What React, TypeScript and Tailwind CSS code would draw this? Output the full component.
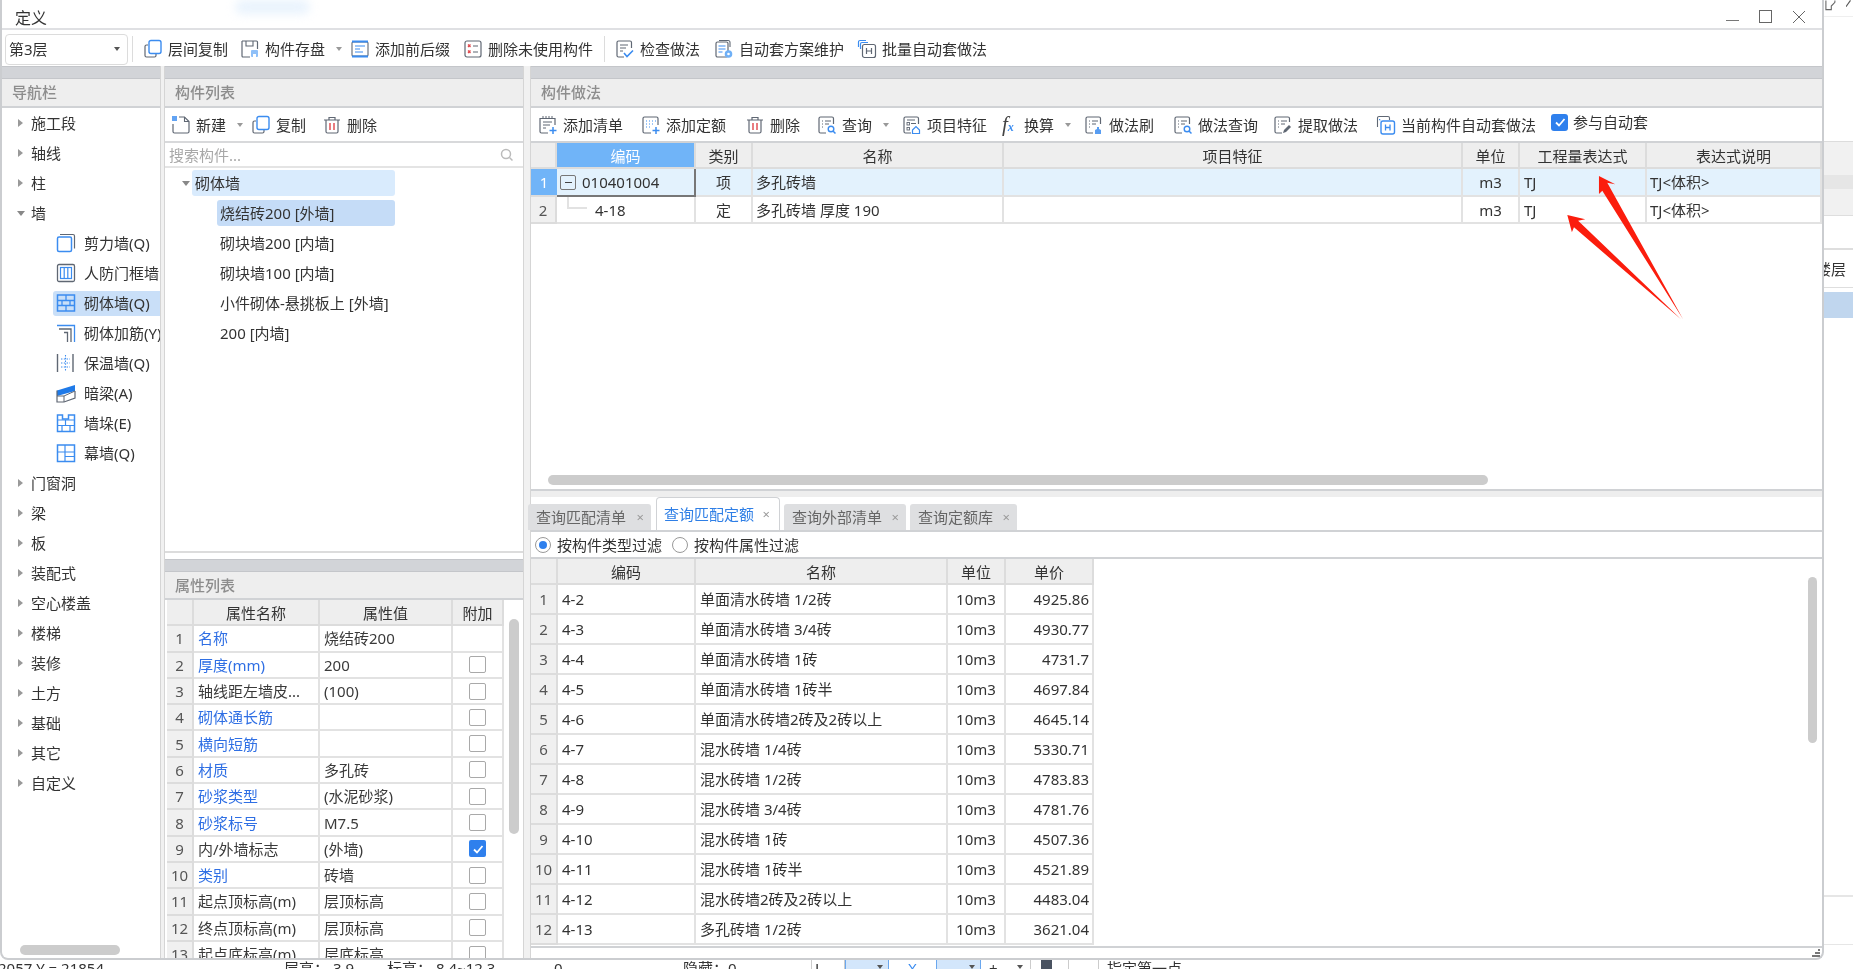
import type { ReactNode } from 'react';
import { clsx } from 'clsx';

const GRAY = '#5f6773';
const BLUE = '#3b8cf0';

function Svg({ children, className }: { children: ReactNode; className?: string }) {
  return (
    <svg viewBox="0 0 20 20" fill="none" className={clsx('h-[20px] w-[20px] shrink-0', className)}>
      {children}
    </svg>
  );
}

const icons: Record<string, ReactNode> = {
  copy: (
    <Svg>
      <path d="M5 6H3.5A1.5 1.5 0 0 0 2 7.500V16.500A1.500 1.500 0 0 0 3.500 18H11.500A1.500 1.500 0 0 0 13 16.500V15" stroke={GRAY} strokeWidth="1.2" />
      <rect x="6" y="1.500" width="12" height="13" rx="2" fill="#fff" stroke={BLUE} strokeWidth="1.4" />
    </Svg>
  ),
  save: (
    <Svg>
      <path d="M2 2h14.500A1 1 0 0 1 17.500 3V10M10 18H3A1 1 0 0 1 2 17V2" stroke={GRAY} strokeWidth="1.2" />
      <path d="M6 2v5h7V2" stroke={GRAY} strokeWidth="1.1" />
      <rect x="11" y="11" width="7" height="7" rx="1" fill="#8fc0f8" />
      <rect x="13" y="15" width="3" height="3" fill="#fff" />
    </Svg>
  ),
  prefix: (
    <Svg>
      <rect x="2" y="3" width="16" height="14" rx="1" stroke={GRAY} strokeWidth="1.1" />
      <path d="M2 2.500h16M2 17.500h16" stroke={BLUE} strokeWidth="1.8" />
      <path d="M5 7h10M5 10h5M5 13h8" stroke={BLUE} strokeWidth="1.1" />
    </Svg>
  ),
  unused: (
    <Svg>
      <rect x="2" y="2" width="16" height="16" rx="2" stroke={GRAY} strokeWidth="1.2" />
      <path d="M5 5.500l2.500 2.500M7.500 5.500L5 8M5 11.500l2.500 2.500M7.500 11.500L5 14" stroke="#e0454a" strokeWidth="1.3" />
      <path d="M10 7h5M10 13h5" stroke={GRAY} strokeWidth="1.1" />
    </Svg>
  ),
  check: (
    <Svg>
      <path d="M9 18H3.500A1.500 1.500 0 0 1 2 16.500V3.500A1.500 1.500 0 0 1 3.500 2H15A1.500 1.500 0 0 1 16.500 3.500V9" stroke={GRAY} strokeWidth="1.2" />
      <path d="M5 6h8M5 9h6M5 12h3" stroke={GRAY} strokeWidth="1" />
      <path d="M9 14l3 3.500 6-6" stroke={BLUE} strokeWidth="1.6" />
    </Svg>
  ),
  plan: (
    <Svg>
      <rect x="2" y="3" width="12" height="15" rx="1.500" stroke={GRAY} strokeWidth="1.2" />
      <path d="M5 1.500h9A2 2 0 0 1 16 3.500V8" stroke={GRAY} strokeWidth="1.1" />
      <path d="M4.500 7h7M4.500 10h7M4.500 13h4" stroke={BLUE} strokeWidth="1.2" />
      <circle cx="14.500" cy="15" r="3.800" fill="#6fb0f7" />
      <circle cx="14.500" cy="15" r="1.300" fill="#fff" />
    </Svg>
  ),
  batch: (
    <Svg>
      <path d="M1.500 8V3A1.500 1.500 0 0 1 3 1.500H9M3.500 10V5A1.500 1.500 0 0 1 5 3.500H11" stroke={BLUE} strokeWidth="1.2" />
      <rect x="5.500" y="5.500" width="13" height="13" rx="2" fill="#fff" stroke={GRAY} strokeWidth="1.2" />
      <path d="M9.500 9v6M14.500 9v6M9.500 12h5" stroke={GRAY} strokeWidth="1.2" />
    </Svg>
  ),
  fresh: (
    <Svg>
      <path d="M8 2h5.500L18 6.500V16.500A1.500 1.500 0 0 1 16.500 18H3.500A1.500 1.500 0 0 1 2 16.500V9" stroke={GRAY} strokeWidth="1.2" />
      <path d="M13.500 2V6.500H18" stroke={GRAY} strokeWidth="1.1" />
      <rect x="1" y="1" width="5" height="5" fill={BLUE} opacity="0.8" />
    </Svg>
  ),
  trash: (
    <Svg>
      <path d="M2 5h16M7 5V2.500h6V5" stroke={GRAY} strokeWidth="1.2" />
      <path d="M4 5v11.500A1.500 1.500 0 0 0 5.500 18h9a1.500 1.500 0 0 0 1.500-1.500V5" stroke={GRAY} strokeWidth="1.2" />
      <path d="M8 8v7M12 8v7" stroke="#e0454a" strokeWidth="1.4" />
    </Svg>
  ),
  addList: (
    <Svg>
      <path d="M10 18H3.500A1.500 1.500 0 0 1 2 16.500V3.500H17V10" stroke={GRAY} strokeWidth="1.2" />
      <path d="M5 1v3M8 1v3M11 1v3M14 1v3M5 7h9M5 10h7M5 13h3" stroke={GRAY} strokeWidth="1" />
      <path d="M15 12v7M11.500 15.500h7" stroke={BLUE} strokeWidth="1.500" />
    </Svg>
  ),
  addQuota: (
    <Svg>
      <path d="M10 18H3.500A1.500 1.500 0 0 1 2 16.500V3.500A1.500 1.500 0 0 1 3.500 2H15.500A1.500 1.500 0 0 1 17 3.500V10" stroke={GRAY} strokeWidth="1.2" />
      <path d="M5 6h1M8 6h1M11 6h1M14 6h1M5 9h1M8 9h1M11 9h1M5 12h1M8 12h1" stroke={BLUE} strokeWidth="1.2" />
      <path d="M15 12v7M11.500 15.500h7" stroke={BLUE} strokeWidth="1.500" />
    </Svg>
  ),
  query: (
    <Svg>
      <path d="M9 18H3.500A1.500 1.500 0 0 1 2 16.500V3.500A1.500 1.500 0 0 1 3.500 2H15A1.500 1.500 0 0 1 16.500 3.500V9" stroke={GRAY} strokeWidth="1.2" />
      <path d="M5 6h1M8 6h6M5 9h1M8 9h4M5 12h1" stroke={GRAY} strokeWidth="1" />
      <circle cx="14" cy="14" r="2.800" stroke={BLUE} strokeWidth="1.400" />
      <path d="M16 16l2.500 2.500" stroke={BLUE} strokeWidth="1.500" />
    </Svg>
  ),
  feature: (
    <Svg>
      <path d="M9 18H3.500A1.500 1.500 0 0 1 2 16.500V3.500A1.500 1.500 0 0 1 3.500 2H15A1.500 1.500 0 0 1 16.500 3.500V9" stroke={GRAY} strokeWidth="1.2" />
      <path d="M5 5h8M9 8.500h5" stroke={GRAY} strokeWidth="1" />
      <rect x="5" y="7.500" width="2.500" height="2.500" stroke={GRAY} strokeWidth="0.9" />
      <rect x="5" y="12.500" width="2.500" height="2.500" stroke={GRAY} strokeWidth="0.9" />
      <path d="M10.500 15l3.500-3.500 3.500 3.500v3.500h-7z" stroke={BLUE} strokeWidth="1.200" />
    </Svg>
  ),
  brush: (
    <Svg>
      <path d="M9 18H3.500A1.500 1.500 0 0 1 2 16.500V3.500A1.500 1.500 0 0 1 3.500 2H15A1.500 1.500 0 0 1 16.500 3.500V9" stroke={GRAY} strokeWidth="1.2" />
      <path d="M5 6h1M8 6h6M5 9h1M8 9h4M5 12h1" stroke={GRAY} strokeWidth="1" />
      <path d="M11 19v-4l2-1v-2h2v2l2 1v4z" fill={BLUE} opacity="0.85" />
    </Svg>
  ),
  extract: (
    <Svg>
      <path d="M9 18H3.500A1.500 1.500 0 0 1 2 16.500V3.500A1.500 1.500 0 0 1 3.500 2H15A1.500 1.500 0 0 1 16.500 3.500V7" stroke={GRAY} strokeWidth="1.2" />
      <path d="M5 6h1M8 6h6M5 9h1M8 9h4M5 12h1" stroke={GRAY} strokeWidth="1" />
      <path d="M10 18l1-3 5-5 2 2-5 5z" fill={GRAY} />
    </Svg>
  ),
  autoH: (
    <Svg>
      <path d="M1.500 12V3A1.500 1.500 0 0 1 3 1.500H12A1.500 1.500 0 0 1 13.500 3V5" stroke={GRAY} strokeWidth="1.1" />
      <path d="M3.500 4v1h1" stroke={BLUE} strokeWidth="1" />
      <rect x="5" y="6" width="13.500" height="13" rx="2" fill="#fff" stroke={BLUE} strokeWidth="1.400" />
      <path d="M9.500 9.500v6M14 9.500v6M9.500 12.500H14" stroke={BLUE} strokeWidth="1.300" />
    </Svg>
  ),
  shear: (
    <Svg>
      <rect x="1.500" y="4" width="14" height="14.500" rx="1.500" stroke={BLUE} strokeWidth="1.500" />
      <path d="M4 1.500H17A1.500 1.500 0 0 1 18.500 3V15.500" stroke={GRAY} strokeWidth="1.200" />
    </Svg>
  ),
  frame: (
    <Svg>
      <rect x="1.500" y="1.500" width="17" height="17" rx="1.500" stroke={GRAY} strokeWidth="1.300" />
      <rect x="4.500" y="4.500" width="11" height="11" stroke={BLUE} strokeWidth="1.200" />
      <path d="M8.200 4.500v11M11.800 4.500v11" stroke={BLUE} strokeWidth="1.200" />
    </Svg>
  ),
  brick: (
    <Svg>
      <rect x="1.500" y="2" width="17" height="16" stroke={BLUE} strokeWidth="1.500" />
      <path d="M1.500 7.500h17M1.500 12.500h17M10 2v5.500M6 7.500v5M14 7.500v5M10 12.500V18" stroke={BLUE} strokeWidth="1.300" />
    </Svg>
  ),
  rebar: (
    <Svg>
      <path d="M1 2.500H18.500V19" stroke={BLUE} strokeWidth="1.300" />
      <path d="M3 6H15V19" stroke={GRAY} strokeWidth="1.300" />
      <path d="M8 9.500H11.500V19" stroke={GRAY} strokeWidth="1.300" />
    </Svg>
  ),
  insulate: (
    <Svg>
      <path d="M1.500 1v18M17 1v18" stroke={GRAY} strokeWidth="1.400" />
      <path d="M5 6h9M5 10h9M5 14h9M9.500 2v16" stroke={BLUE} strokeWidth="1.100" strokeDasharray="1.400 1.400" />
    </Svg>
  ),
  beam: (
    <Svg>
      <path d="M1 7.500L19 2V8L1 13z" fill="#1f7ae8" />
      <path d="M1 7.500V19H8L19 15V8" stroke={GRAY} strokeWidth="1.200" />
      <path d="M1 13H8V19M8 13L19 8" stroke={GRAY} strokeWidth="1" />
    </Svg>
  ),
  pier: (
    <Svg>
      <path d="M1.500 18.500V2h5v4h6V2h6v16.500z" stroke={BLUE} strokeWidth="1.500" />
      <path d="M1.500 7h17M1.500 12.500h17M9.500 7v5.500M6 12.500v6M14 12.500v6" stroke={BLUE} strokeWidth="1.200" />
    </Svg>
  ),
  curtain: (
    <Svg>
      <rect x="1.500" y="2" width="17" height="16.500" stroke={BLUE} strokeWidth="1.500" />
      <path d="M1.500 9h17M9 2v16.500M9 13.500h9.500" stroke={BLUE} strokeWidth="1.200" />
    </Svg>
  ),
};

function Caret({ className }: { className?: string }) {
  return <span className={clsx('h-0 w-0 border-x-[3px] border-t-[4px] border-x-transparent', className ?? 'border-t-[#999]')} />;
}

function Tool({ icon, label, width, caret }: { icon: ReactNode; label: string; width: string; caret?: boolean }) {
  return (
    <div className={clsx('flex shrink-0 items-center gap-[5px]', width)}>
      {icon}
      <span className="whitespace-nowrap">{label}</span>
      {caret ? <Caret className="ml-[6px] border-t-[#999]" /> : null}
    </div>
  );
}

function PanelHead({ title, low }: { title: string; low?: boolean }) {
  return (
    <>
      <div className="h-[13px] shrink-0 border-y border-[#c4c6ca] bg-[#d2d4d8]" />
      <div className={clsx('flex shrink-0 items-center border-b-2 border-[#d0d2d5] bg-[#eeeeee] pl-[10px] font-medium text-[#8d8d8d]', low ? 'h-[28px]' : 'h-[29px] pb-[2px]')}>
        {title}
      </div>
    </>
  );
}

const navItems: { label: string; icon?: keyof typeof icons; open?: boolean; active?: boolean }[] = [
  { label: '施工段' },
  { label: '轴线' },
  { label: '柱' },
  { label: '墙', open: true },
  { label: '剪力墙(Q)', icon: 'shear' },
  { label: '人防门框墙', icon: 'frame' },
  { label: '砌体墙(Q)', icon: 'brick', active: true },
  { label: '砌体加筋(Y)', icon: 'rebar' },
  { label: '保温墙(Q)', icon: 'insulate' },
  { label: '暗梁(A)', icon: 'beam' },
  { label: '墙垛(E)', icon: 'pier' },
  { label: '幕墙(Q)', icon: 'curtain' },
  { label: '门窗洞' },
  { label: '梁' },
  { label: '板' },
  { label: '装配式' },
  { label: '空心楼盖' },
  { label: '楼梯' },
  { label: '装修' },
  { label: '土方' },
  { label: '基础' },
  { label: '其它' },
  { label: '自定义' },
];

function NavPanel() {
  return (
    <div className="relative flex w-[158px] shrink-0 flex-col overflow-hidden">
      <PanelHead title="导航栏" />
      <div>
        {navItems.map((item) =>
          item.icon ? (
            <div key={item.label} className="flex h-[30px] items-center pl-[51px]">
              <div className={clsx('flex h-[25px] flex-1 items-center gap-[8px] whitespace-nowrap rounded-l-[3px] pl-[3px]', item.active && 'bg-[#c9dff8]')}>
                {icons[item.icon]}
                <span>{item.label}</span>
              </div>
            </div>
          ) : (
            <div key={item.label} className="flex h-[30px] items-center pl-[15px]">
              <span className="flex w-[14px] justify-start">
                {item.open ? (
                  <span className="h-0 w-0 border-x-[4px] border-t-[5px] border-x-transparent border-t-[#888]" />
                ) : (
                  <span className="ml-[1px] h-0 w-0 border-y-[4px] border-l-[5px] border-y-transparent border-l-[#999]" />
                )}
              </span>
              <span>{item.label}</span>
            </div>
          ),
        )}
      </div>
      <div className="absolute bottom-[3px] left-[18px] h-[10px] w-[100px] rounded-full bg-[#cccccc]" />
    </div>
  );
}

const treeChildren = ['砌块墙200 [内墙]', '砌块墙100 [内墙]', '小件砌体-悬挑板上 [外墙]', '200 [内墙]'];

const attrs: { name: string; value: string; link: boolean; checked?: boolean; noBox?: boolean }[] = [
  { name: '名称', value: '烧结砖200', link: true, noBox: true },
  { name: '厚度(mm)', value: '200', link: true },
  { name: '轴线距左墙皮...', value: '(100)', link: false },
  { name: '砌体通长筋', value: '', link: true },
  { name: '横向短筋', value: '', link: true },
  { name: '材质', value: '多孔砖', link: true },
  { name: '砂浆类型', value: '(水泥砂浆)', link: true },
  { name: '砂浆标号', value: 'M7.5', link: true },
  { name: '内/外墙标志', value: '(外墙)', link: false, checked: true },
  { name: '类别', value: '砖墙', link: true },
  { name: '起点顶标高(m)', value: '层顶标高', link: false },
  { name: '终点顶标高(m)', value: '层顶标高', link: false },
  { name: '起点底标高(m)', value: '层底标高', link: false },
];

function Head({ children, active }: { children?: ReactNode; active?: boolean }) {
  return (
    <div className={clsx('flex items-center justify-center whitespace-nowrap border-r-2 border-b-2 border-[#dcdcdc] pt-[2px]', active ? 'bg-[#70b4f8] text-white' : 'bg-[#eeeeee]')}>
      {children}
    </div>
  );
}

function Cell({ children, className }: { children?: ReactNode; className?: string }) {
  return (
    <div className={clsx('flex items-center overflow-hidden whitespace-nowrap border-r-2 border-b-2 border-[#e2e2e2]', className)}>
      {children}
    </div>
  );
}

function Num({ children }: { children: ReactNode }) {
  return <div className="flex items-center justify-center border-r-2 border-b-2 border-[#dcdcdc] bg-[#f0f0f0] text-[#555]">{children}</div>;
}

function ListPanel() {
  return (
    <div className="flex w-[358px] shrink-0 flex-col overflow-hidden">
      <PanelHead title="构件列表" />
      <div className="flex h-[33px] shrink-0 items-center pl-[6px]">
        <Tool icon={icons.fresh} label="新建" width="w-[80px]" caret />
        <Tool icon={icons.copy} label="复制" width="w-[71px]" />
        <Tool icon={icons.trash} label="删除" width="w-[70px]" />
      </div>
      <div className="h-[2px] shrink-0 bg-[#d8d9db]" />
      <div className="flex h-[23px] shrink-0 items-center justify-between rounded-[4px] pl-[4px] pr-[9px] text-[#a8a8a8]">
        <span>搜索构件...</span>
        <svg viewBox="0 0 14 14" fill="none" className="h-[14px] w-[14px]">
          <circle cx="6" cy="6" r="4.500" stroke="#bbb" strokeWidth="1.500" />
          <path d="M9.500 9.500L12.500 12.500" stroke="#bbb" strokeWidth="1.500" />
        </svg>
      </div>
      <div className="h-[2px] shrink-0 bg-[#e4e4e4]" />
      <div className="flex h-[385px] shrink-0 flex-col border-b-2 border-[#dcdcdc] pt-[2px]">
        <div className="flex h-[26px] items-center pl-[17px]">
          <span className="mr-[2px] h-0 w-0 border-x-[4px] border-t-[5px] border-x-transparent border-t-[#888]" />
          <span className="flex h-[26px] w-[203px] items-center rounded-[3px] bg-[#d9ebfd] pl-[3px]">砌体墙</span>
        </div>
        <div className="mt-[4px] flex h-[26px] items-center pl-[52px]">
          <span className="flex h-[26px] w-[178px] items-center rounded-[3px] bg-[#c5dcf7] pl-[3px]">烧结砖200 [外墙]</span>
        </div>
        {treeChildren.map((label) => (
          <div key={label} className="mt-[4px] flex h-[26px] items-center pl-[55px]">
            {label}
          </div>
        ))}
      </div>
      <div className="h-[6px] shrink-0" />
      <PanelHead title="属性列表" low />
      <div className="relative flex-1 overflow-hidden pl-[2px]">
        <div className="grid w-[337px] grid-cols-[27px_126px_133px_51px] auto-rows-[26.3px]">
          <Head />
          <Head>属性名称</Head>
          <Head>属性值</Head>
          <Head>附加</Head>
          {attrs.map((row, i) => (
            <div key={row.name} className="contents">
              <Num>{i + 1}</Num>
              <Cell className={clsx('pl-[4px]', row.link ? 'text-[#2f6fe4]' : 'text-[#3a3a3a]')}>{row.name}</Cell>
              <Cell className="pl-[4px] text-[#3a3a3a]">{row.value}</Cell>
              <Cell className="justify-center">
                {row.noBox ? null : row.checked ? (
                  <span className="flex h-[17px] w-[17px] items-center justify-center rounded-[2px] bg-[#2f80ed]">
                    <svg viewBox="0 0 12 12" fill="none" className="h-[12px] w-[12px]">
                      <path d="M2 6.500L5 9.500L10.500 3" stroke="#fff" strokeWidth="1.800" />
                    </svg>
                  </span>
                ) : (
                  <span className="h-[17px] w-[17px] rounded-[2px] border border-[#a9a9a9] bg-white" />
                )}
              </Cell>
            </div>
          ))}
        </div>
        <div className="absolute right-[4px] top-[19px] h-[215px] w-[10px] rounded-full bg-[#cccccc]" />
      </div>
    </div>
  );
}

function MethodTable() {
  return (
    <div className="grid w-full grid-cols-[26px_139px_57px_251px_459px_57px_127px_1fr] grid-rows-[26px_28px_27px]">
      <Head />
      <Head active>编码</Head>
      <Head>类别</Head>
      <Head>名称</Head>
      <Head>项目特征</Head>
      <Head>单位</Head>
      <Head>工程量表达式</Head>
      <Head>表达式说明</Head>

      <div className="flex items-center justify-center border-b-2 border-[#dcdcdc] bg-[#70b4f8] text-white">1</div>
      <div className="flex items-center gap-[6px] border-r-2 border-b-2 border-[#777] bg-[#e3f2fd] pl-[3px]">
        <span className="flex h-[15px] w-[16px] items-center justify-center rounded-[2px] border border-[#777]">
          <span className="h-px w-[7px] bg-[#444]" />
        </span>
        <span>010401004</span>
      </div>
      <Cell className="justify-center bg-[#e3f2fd]">项</Cell>
      <Cell className="bg-[#e3f2fd] pl-[3px]">多孔砖墙</Cell>
      <Cell className="bg-[#e3f2fd]" />
      <Cell className="justify-center bg-[#e3f2fd]">m3</Cell>
      <Cell className="bg-[#e3f2fd] pl-[4px]">TJ</Cell>
      <Cell className="bg-[#e3f2fd] pl-[3px]">{'TJ<体积>'}</Cell>

      <Num>2</Num>
      <Cell className="relative pl-[38px]">
        <span className="absolute left-[10px] top-0 h-[12px] w-[20px] border-b-2 border-l-2 border-[#e2e2e2]" />
        4-18
      </Cell>
      <Cell className="justify-center">定</Cell>
      <Cell className="pl-[3px]">多孔砖墙 厚度 190</Cell>
      <Cell />
      <Cell className="justify-center">m3</Cell>
      <Cell className="pl-[4px]">TJ</Cell>
      <Cell className="pl-[3px]">{'TJ<体积>'}</Cell>
    </div>
  );
}

const quotas = [
  ['4-2', '单面清水砖墙 1/2砖', '4925.86'],
  ['4-3', '单面清水砖墙 3/4砖', '4930.77'],
  ['4-4', '单面清水砖墙 1砖', '4731.7'],
  ['4-5', '单面清水砖墙 1砖半', '4697.84'],
  ['4-6', '单面清水砖墙2砖及2砖以上', '4645.14'],
  ['4-7', '混水砖墙 1/4砖', '5330.71'],
  ['4-8', '混水砖墙 1/2砖', '4783.83'],
  ['4-9', '混水砖墙 3/4砖', '4781.76'],
  ['4-10', '混水砖墙 1砖', '4507.36'],
  ['4-11', '混水砖墙 1砖半', '4521.89'],
  ['4-12', '混水砖墙2砖及2砖以上', '4483.04'],
  ['4-13', '多孔砖墙 1/2砖', '3621.04'],
];

const tabs = [
  { label: '查询匹配清单', width: 'w-[123px]', gap: 'mr-[5px]' },
  { label: '查询匹配定额', width: 'w-[124px]', gap: 'mr-[4px]', active: true },
  { label: '查询外部清单', width: 'w-[122px]', gap: 'mr-[4px]' },
  { label: '查询定额库', width: 'w-[107px]', gap: '' },
];

function Radio({ on, label, width }: { on?: boolean; label: string; width: string }) {
  return (
    <div className={clsx('flex items-center gap-[6px]', width)}>
      <span className="flex h-[16px] w-[16px] items-center justify-center rounded-full border border-[#999]">
        {on ? <span className="h-[8px] w-[8px] rounded-full bg-[#2f80ed]" /> : null}
      </span>
      <span>{label}</span>
    </div>
  );
}

function MethodPanel() {
  return (
    <div className="flex min-w-0 flex-1 flex-col">
      <PanelHead title="构件做法" />
      <div className="flex h-[33px] shrink-0 items-center pl-[7px]">
        <Tool icon={icons.addList} label="添加清单" width="w-[103px]" />
        <Tool icon={icons.addQuota} label="添加定额" width="w-[104px]" />
        <Tool icon={icons.trash} label="删除" width="w-[72px]" />
        <Tool icon={icons.query} label="查询" width="w-[85px]" caret />
        <Tool icon={icons.feature} label="项目特征" width="w-[100px]" />
        <Tool
          icon={
            <span className="w-[17px] whitespace-nowrap font-['Liberation_Serif'] text-[21px] italic leading-none text-[#444]">
              f<span className="text-[12px] font-bold text-[#3b8cf0]">x</span>
            </span>
          }
          label="换算"
          width="w-[82px]"
          caret
        />
        <Tool icon={icons.brush} label="做法刷" width="w-[89px]" />
        <Tool icon={icons.query} label="做法查询" width="w-[100px]" />
        <Tool icon={icons.extract} label="提取做法" width="w-[103px]" />
        <Tool icon={icons.autoH} label="当前构件自动套做法" width="w-[175px]" />
        <div className="-mt-[5px] flex items-center gap-[5px]">
          <span className="flex h-[17px] w-[17px] items-center justify-center rounded-[3px] bg-[#2f80ed]">
            <svg viewBox="0 0 12 12" fill="none" className="h-[12px] w-[12px]">
              <path d="M2 6.500L5 9.500L10.500 3" stroke="#fff" strokeWidth="1.800" />
            </svg>
          </span>
          <span>参与自动套</span>
        </div>
      </div>
      <div className="h-[2px] shrink-0 bg-[#d0d2d5]" />
      <div className="flex h-[348px] shrink-0 flex-col border-b-2 border-[#d0d2d5]">
        <MethodTable />
        <div className="flex-1" />
        <div className="mb-[4px] ml-[17px] h-[10px] w-[940px] rounded-full bg-[#cccccc]" />
      </div>
      <div className="h-[6px] shrink-0 bg-[#eeeeee]" />
      <div className="-ml-[3px] flex h-[33px] shrink-0 items-end text-[#666]">
        {tabs.map((tab) =>
          tab.active ? (
            <div key={tab.label} className={clsx('flex h-[33px] items-center justify-between rounded-t-[4px] border-x border-t border-[#d0d2d5] pl-[7px] pr-[9px] text-[#2f7fe6]', tab.width, tab.gap)}>
              <span>{tab.label}</span>
              <span className="text-[13px] text-[#999]">×</span>
            </div>
          ) : (
            <div key={tab.label} className={clsx('flex h-[26px] items-center justify-between rounded-t-[3px] bg-[#dedfe1] pl-[8px] pr-[7px]', tab.width, tab.gap)}>
              <span>{tab.label}</span>
              <span className="text-[13px] text-[#999]">×</span>
            </div>
          ),
        )}
      </div>
      <div className="flex h-[29px] shrink-0 items-center border-y-2 border-[#d0d2d5] pl-[4px]">
        <Radio on label="按构件类型过滤" width="w-[137px]" />
        <Radio label="按构件属性过滤" width="w-[137px]" />
      </div>
      <div className="relative flex-1 overflow-hidden">
        <div className="grid w-[563px] grid-cols-[27px_138px_252px_58px_88px] grid-rows-[26px_repeat(12,30px)]">
          <Head />
          <Head>编码</Head>
          <Head>名称</Head>
          <Head>单位</Head>
          <Head>单价</Head>
          {quotas.map(([code, name, price], i) => (
            <div key={code} className="contents">
              <Num>{i + 1}</Num>
              <Cell className="pl-[4px]">{code}</Cell>
              <Cell className="pl-[4px]">{name}</Cell>
              <Cell className="justify-center">10m3</Cell>
              <Cell className="justify-end pr-[3px]">{price}</Cell>
            </div>
          ))}
        </div>
        <div className="absolute left-0 right-0 top-[387px] h-[2px] bg-[#d0d2d5]" />
        <div className="absolute right-[5px] top-[18px] h-[166px] w-[9px] rounded-full bg-[#cccccc]" />
        <div className="absolute bottom-[1px] right-[2px] flex flex-col items-end gap-[1px]">
          <span className="h-[2px] w-[2px] bg-[#777]" />
          <span className="h-[2px] w-[5px] bg-[#777]" />
          <span className="h-[2px] w-[8px] bg-[#777]" />
        </div>
      </div>
    </div>
  );
}

function Sep() {
  return <div className="h-[26px] w-px shrink-0 bg-[#dcdcdc]" />;
}

function RightStrip() {
  return (
    <div className="flex w-[29px] shrink-0 flex-col overflow-hidden bg-white">
      <div className="flex h-[17px] shrink-0 items-start gap-[10px] border-b border-[#efefef] pl-[1px]">
        <svg viewBox="0 0 12 12" fill="none" className="h-[12px] w-[12px]">
          <path d="M1 0v10h6V6l4-4V0" stroke="#666" strokeWidth="1.200" />
        </svg>
        <svg viewBox="0 0 8 8" fill="none" className="h-[8px] w-[8px]">
          <path d="M0 7L5 0" stroke="#555" strokeWidth="1.200" />
        </svg>
      </div>
      <div className="h-[124px] shrink-0" />
      <div className="h-[34px] shrink-0 border-t border-[#dcdcdc] bg-[#f1f1f1]" />
      <div className="h-[14px] shrink-0 bg-[#e6e6e6]" />
      <div className="h-[27px] shrink-0 border-b border-[#dedede] bg-[#f1f1f1]" />
      <div className="h-[34px] shrink-0 border-b-2 border-[#dedede]" />
      <div className="flex h-[38px] shrink-0 items-center justify-end overflow-hidden whitespace-nowrap border-b border-[#dedede] pr-[7px]">
        楼层
      </div>
      <div className="h-[4px] shrink-0" />
      <div className="h-[26px] shrink-0 bg-[#c0d6ee]" />
      <div className="h-[579px] shrink-0 border-b-2 border-[#e6e6e6]" />
      <div className="h-[48px] shrink-0 border-b border-[#e6e6e6]" />
    </div>
  );
}

function StatusBar() {
  return (
    <div className="flex h-[20px] shrink-0 items-start overflow-hidden whitespace-nowrap leading-[16px]">
      <span className="-ml-[2px] w-[286px]">2057 Y = 21854</span>
      <span className="w-[103px]">层高： 3.9</span>
      <span className="w-[167px]">标高： 8.4~12.3</span>
      <span className="w-[129px]">0</span>
      <span className="w-[128px]">隐藏：0</span>
      <span className="h-[20px] w-[34px] border-x border-[#ccc] pl-[3px]">L</span>
      <span className="flex h-[20px] w-[44px] justify-end gap-[8px] border-x border-[#6aa7ee] bg-[#d3e6fb] pr-[5px] pt-[5px]">
        <Caret className="border-t-[#555]" />
      </span>
      <span className="w-[47px] text-center text-[#3b8cf0]">X</span>
      <span className="flex h-[20px] w-[45px] justify-end border-x border-[#6aa7ee] bg-[#d3e6fb] pr-[5px] pt-[5px]">
        <Caret className="border-t-[#555]" />
      </span>
      <span className="flex h-[20px] w-[50px] justify-between border-r border-[#ccc] pl-[8px] pr-[7px]">
        +
        <Caret className="mt-[5px] border-t-[#555]" />
      </span>
      <span className="ml-[10px] h-[20px] w-[11px] bg-[#4a5361]" />
      <span className="ml-[16px] h-[20px] w-[31px] border-x border-[#ccc]" />
      <span className="ml-[8px]">指定第一点</span>
    </div>
  );
}

export default function App() {
  return (
    <div className="relative flex h-[969px] w-[1853px] flex-col overflow-hidden bg-white font-['Noto_Sans','Noto_Sans_CJK_SC',sans-serif] text-[15px] leading-[20px] text-[#333] blur-[0.4px]">
      <div className="absolute left-[235px] top-0 h-[14px] w-[75px] rounded-full bg-[#e9f3fd] blur-[5px]" />
      <div className="flex h-[949px] shrink-0">
        <div className="flex h-[960px] w-[1824px] shrink-0 flex-col overflow-hidden rounded-b-[8px] border-x-2 border-b-2 border-[#cbcdd0] bg-white">
          <div className="flex h-[30px] shrink-0 items-center justify-between border-b-2 border-[#dfe0e3] pl-[13px] pr-[16px]">
            <span className="mt-[8px] text-[16px]">定义</span>
            <div className="mt-[5px] flex items-center gap-[20px]">
              <span className="mt-[7px] h-px w-[13px] bg-[#777]" />
              <span className="h-[13px] w-[13px] border border-[#666]" />
              <svg viewBox="0 0 14 14" fill="none" className="h-[14px] w-[14px]">
                <path d="M1 1L13 13M13 1L1 13" stroke="#666" strokeWidth="1" />
              </svg>
            </div>
          </div>
          <div className="flex h-[36px] shrink-0 items-center pl-[3px] pt-[2px]">
            <div className="flex h-[31px] w-[123px] shrink-0 items-center justify-between rounded-[4px] border border-[#dcdcdc] pl-[3px] pr-[7px]">
              <span>第3层</span>
              <Caret className="border-t-[#555]" />
            </div>
            <div className="w-[4px]" />
            <Sep />
            <div className="w-[10px]" />
            <Tool icon={icons.copy} label="层间复制" width="w-[97px]" />
            <Tool icon={icons.save} label="构件存盘" width="w-[110px]" caret />
            <Tool icon={icons.prefix} label="添加前后缀" width="w-[113px]" />
            <Tool icon={icons.unused} label="删除未使用构件" width="w-[141px]" />
            <Sep />
            <div className="w-[10px]" />
            <Tool icon={icons.check} label="检查做法" width="w-[99px]" />
            <Tool icon={icons.plan} label="自动套方案维护" width="w-[143px]" />
            <Tool icon={icons.batch} label="批量自动套做法" width="w-[150px]" />
          </div>
          <div className="flex min-h-0 flex-1">
            <NavPanel />
            <div className="w-[5px] shrink-0 border-x border-[#d5d5d5] bg-[#f1f1f1]" />
            <ListPanel />
            <div className="w-[8px] shrink-0 border-x border-[#d5d5d5] bg-[#f1f1f1]" />
            <MethodPanel />
          </div>
        </div>
        <RightStrip />
      </div>
      <div className="h-[11px] shrink-0" />
      <StatusBar />
      {/* 红色箭头标注 */}
      <svg viewBox="0 0 1568 1020" preserveAspectRatio="none" className="absolute left-[1200px] top-0 h-[340px] w-[653px]">
        <path d="M958 528L997 553L978 548L1160 958L966 572L958 582Z" fill="#fb1d0d" />
        <path d="M882 645L925 658L908 662L1155 958L898 682L893 697Z" fill="#fb1d0d" />
      </svg>
    </div>
  );
}
